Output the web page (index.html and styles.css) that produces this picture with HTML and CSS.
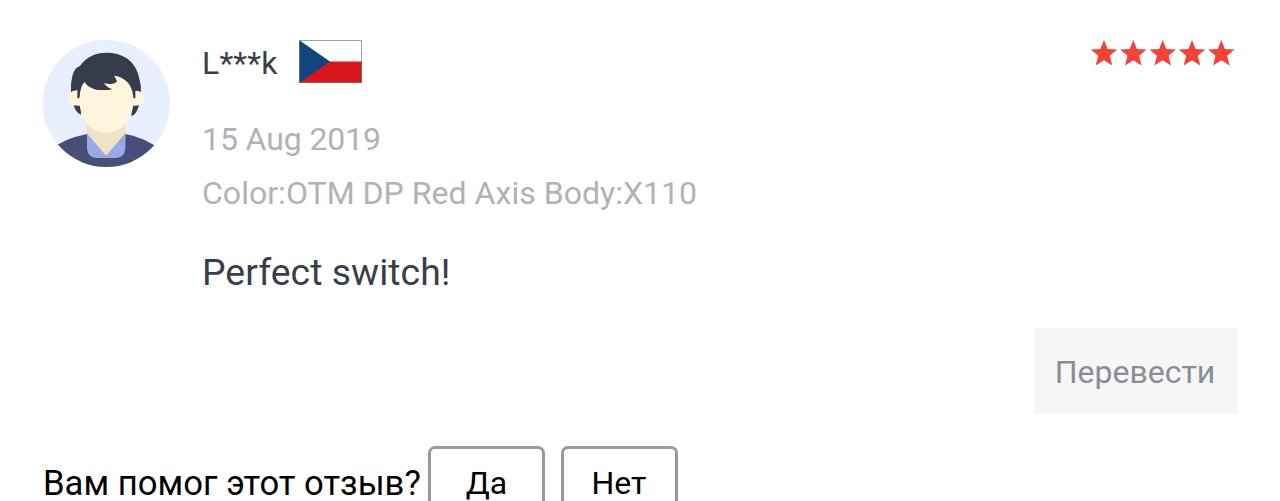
FILE: index.html
```html
<!DOCTYPE html>
<html lang="ru">
<head>
<meta charset="utf-8">
<title>Review</title>
<link rel="stylesheet" href="styles.css">
</head>
<body>
<article class="review">
  <div class="main">
    <svg class="avatar" viewBox="0 0 420 420">
      <defs><clipPath id="disc"><circle cx="211" cy="214" r="191"/></clipPath></defs>
      <g clip-path="url(#disc)">
        <rect width="420" height="420" fill="#e9effe"/>
        <path d="M40 356Q80 320 153 306H268Q330 316 382 360V420H40Z" fill="#474f78"/>
        <path d="M112 215H134L135 248Q118 242 112 215ZM310 215H288L286 252Q304 246 310 215Z" fill="#363c4b"/>
        <path d="M153 270H268V320L211 372L153 320Z" fill="#ece4c4"/>
        <path d="M153 304L210 371L268 304V350Q266 376 240 378H182Q155 376 153 350Z" fill="#98a9e6"/>
        <path d="M105 178Q104 110 132 102C152 74 178 62 211 62C268 62 302 94 310 140Q315 160 314 184H105Z" fill="#363c4b"/>
        <path d="M120 174Q97 178 97 200Q98 221 126 221H298Q324 220 324 200Q322 178 300 175Z" fill="#fff4dc"/>
        <path d="M105 178Q104 150 112 140H308Q316 155 314 178L298 176V199H291L284 168H138L130 199H124V174Z" fill="#363c4b"/>
        <path d="M131 195Q133 160 146 150C158 173 200 182 228 171Q216 169 203 153Q230 160 243 149Q240 138 234 131C262 134 288 152 292 195V218C284 276 250 302 211 302C172 302 138 276 131 218Z" fill="#fff4dc"/>
      </g>
    </svg>
    <div class="content">
      <div class="head">
        <div class="author">
          <span class="name">L***k</span>
          <svg class="flag" viewBox="0 0 63 43">
            <path d="M0 0H63V22H0Z" fill="#fff"/>
            <path d="M0 21.5H63V43H0Z" fill="#d7151b"/>
            <path d="M0 0L31 21.5L0 43Z" fill="#11457e"/>
            <rect x=".5" y=".5" width="62" height="42" fill="none" stroke="#777" stroke-opacity=".7"/>
          </svg>
        </div>
        <svg class="stars" viewBox="0 0 144 26">
          <defs><path id="star" d="M13 0L16.6 9L26.2 9.6L18.8 15.8L21.3 25.4L13 20.2L4.7 25.4L7.2 15.8L-.2 9.6L9.4 9Z"/></defs>
          <g fill="#f44336">
            <use href="#star"/><use href="#star" x="29.3"/><use href="#star" x="58.7"/><use href="#star" x="88"/><use href="#star" x="117.3"/>
          </g>
        </svg>
      </div>
      <div class="date">15 Aug 2019</div>
      <div class="options">Color:OTM DP Red Axis Body:X110</div>
      <div class="text">Perfect switch!</div>
    </div>
  </div>
  <button class="translate">Перевести</button>
  <div class="feedback">
    <span class="question">Вам помог этот отзыв?</span>
    <button class="vote">Да</button>
    <button class="vote">Нет</button>
  </div>
</article>
</body>
</html>
```
FILE: styles.css
```css
* { box-sizing: border-box; }
body {
  margin: 0;
  height: 501px;
  overflow: hidden;
  background: #fff;
  font-family: Roboto, "Liberation Sans", sans-serif;
  font-size: 32px;
}
button { font: inherit; padding: 0; margin: 0; }
.review {
  display: flex;
  flex-direction: column;
  padding: 32px 42px 0 36px;
}
.main { display: flex; height: 296px; }
.avatar { width: 140px; height: 140px; flex: none; }
.content { flex: 1; padding: 8px 3px 0 26px; }
.head {
  display: flex;
  justify-content: space-between;
  align-items: flex-start;
  height: 72px;
}
.author { display: flex; align-items: flex-start; }
.name { width: 97px; line-height: 46px; letter-spacing: .15px; color: #3a3e4a; }
.flag { width: 63px; height: 43px; }
.stars { width: 144px; height: 26px; overflow: visible; }
.date, .options { line-height: 54px; color: #b0b2b7; }
.date { letter-spacing: -.1px; }
.options { letter-spacing: .03px; }
.text {
  margin-top: 28px;
  font-size: 37.33px;
  line-height: 48px;
  letter-spacing: .05px;
  color: #3a3e4a;
}
.translate {
  align-self: flex-end;
  width: 204px;
  height: 86px;
  padding: 2px 2px 0 0;
  border: 0;
  background: #f6f6f6;
  color: #8b8d94;
}
.feedback {
  display: flex;
  margin: 32px 0 0 6px;
  color: #000;
}
.question {
  width: 386px;
  padding-left: 1px;
  font-size: 34.67px;
  line-height: 74px;
  white-space: nowrap;
}
.vote {
  width: 117px;
  height: 74px;
  margin-right: 15.5px;
  border: 3px solid #999;
  border-radius: 7px;
  background: #fff;
  color: #000;
}
```
